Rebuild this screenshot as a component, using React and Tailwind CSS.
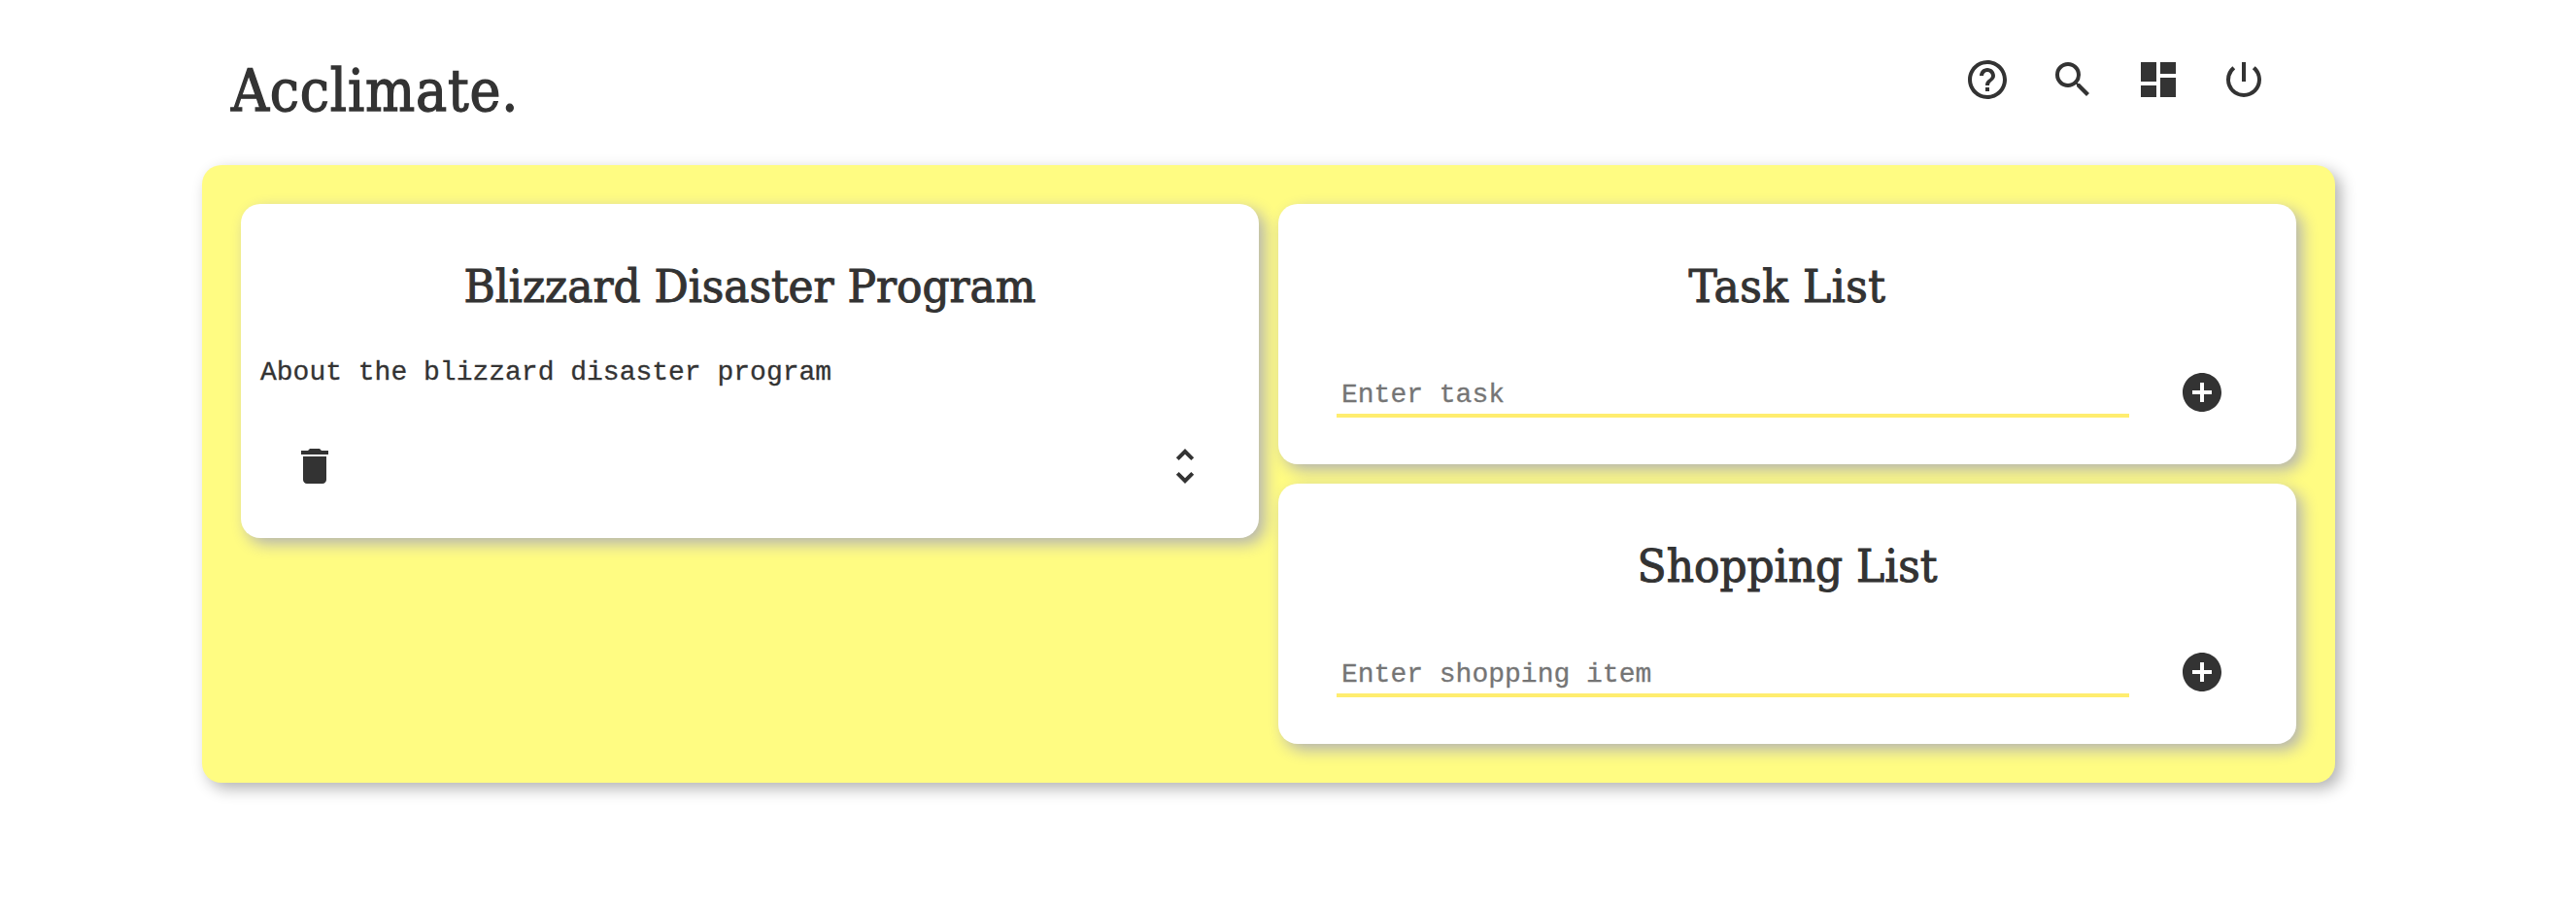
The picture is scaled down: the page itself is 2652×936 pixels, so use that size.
import React from "react";
import {
  MdAddCircle,
  MdDashboard,
  MdDelete,
  MdHelpOutline,
  MdPowerSettingsNew,
  MdSearch,
  MdUnfoldMore,
} from "react-icons/md";

const cardClass = "rounded-[20px] bg-white shadow-[6px_6px_16px_#b3b3b3]";

function Card({ title, titleClass, className, children }) {
  return (
    <section className={`${cardClass} ${className}`}>
      <h2
        className={`h-[66px] scale-x-105 text-center font-['DejaVu_Serif_Condensed','DejaVu_Serif',serif] text-[46.5px] leading-[66px] [-webkit-text-stroke:1px_#333] ${titleClass}`}
      >
        {title}
      </h2>
      {children}
    </section>
  );
}

function ListCard({ title, titleClass, placeholder }) {
  return (
    <Card title={title} titleClass={titleClass} className="h-[268px] pt-[52px]">
      <form className="flex items-start pt-[50px] pl-[60px]">
        <input
          placeholder={placeholder}
          className="h-[52px] w-[816px] border-b-4 border-[#ffed6f] bg-transparent pt-2 pr-1 pl-[5px] font-['Liberation_Mono',monospace] text-[28px] leading-9 [-webkit-text-stroke:0.3px_#757575] placeholder:text-[#757575] placeholder:opacity-100 outline-none"
        />
        <button type="button" aria-label="Add" className="mt-[2px] ml-[51px]">
          <MdAddCircle size={48} />
        </button>
      </form>
    </Card>
  );
}

export default function App() {
  return (
    <div className="min-h-[936px] w-[2652px] bg-white text-[#333]">
      <header className="flex h-[170px] items-start justify-between pr-[318px] pl-[238px]">
        <h1 className="pt-[49px] font-['DejaVu_Serif_Condensed','DejaVu_Serif',serif] text-[60px] leading-[88px] tracking-[0.8px] [-webkit-text-stroke:1.3px_#333]">
          Acclimate.
        </h1>
        <nav className="flex gap-10 pt-[58px]">
          <MdHelpOutline size={48} />
          <MdSearch size={48} />
          <MdDashboard size={48} />
          <MdPowerSettingsNew size={48} />
        </nav>
      </header>
      <main className="ml-[208px] flex h-[636px] w-[2196px] items-start gap-5 rounded-[20px] bg-[#fffc82] p-10 shadow-[6px_6px_16px_#b3b3b3]">
        <Card
          title="Blizzard Disaster Program"
          titleClass="tracking-normal"
          className="h-[344px] w-[1048px] pt-[52px]"
        >
          <p className="pt-[38px] pl-5 font-['Liberation_Mono',monospace] text-[28px] leading-9 [-webkit-text-stroke:0.3px_#333]">
            About the blizzard disaster program
          </p>
          <div className="flex justify-between px-[52px] pt-[54px]">
            <MdDelete size={48} />
            <MdUnfoldMore size={48} />
          </div>
        </Card>
        <div className="flex w-[1048px] flex-col gap-5">
          <ListCard title="Task List" titleClass="tracking-[0.5px]" placeholder="Enter task" />
          <ListCard title="Shopping List" titleClass="tracking-normal" placeholder="Enter shopping item" />
        </div>
      </main>
    </div>
  );
}
